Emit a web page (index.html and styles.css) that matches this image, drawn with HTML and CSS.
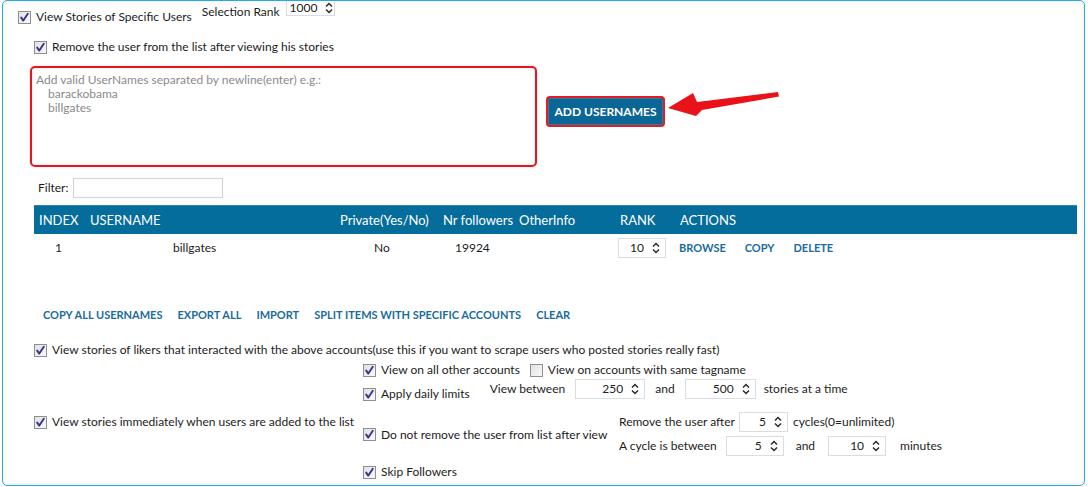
FILE: index.html
```html
<!DOCTYPE html>
<html>
<head>
<meta charset="utf-8">
<link rel="stylesheet" href="styles.css">
</head>
<body>
<div class="panel">
  <div class="row1">
    <label class="cb first"><span class="box"><svg viewBox="0 0 11 11"><path d="M2.2 5.6 L4.3 8.6 L8.8 1.8"/></svg></span>View Stories of Specific Users</label>
    <span class="sel-label">Selection Rank</span>
    <span class="spin sel"><span class="val left">1000</span><svg class="arr" viewBox="0 0 8 12"><path d="M1 4.5 L4 1.5 L7 4.5 M1 7.5 L4 10.5 L7 7.5"/></svg></span>
  </div>
  <div class="row2">
    <label class="cb"><span class="box"><svg viewBox="0 0 11 11"><path d="M2.2 5.6 L4.3 8.6 L8.8 1.8"/></svg></span>Remove the user from the list after viewing his stories</label>
  </div>
  <div class="add">
    <div class="names">
      <div>Add valid UserNames separated by newline(enter) e.g.:</div>
      <div class="ind">barackobama</div>
      <div class="ind">billgates</div>
    </div>
    <div class="btn">ADD USERNAMES</div>
    <svg class="arrow" viewBox="0 0 114 28" width="114" height="28"><polygon points="2,18 27,3 31,12 112,2 113,6.5 36,20 30,26"/></svg>
  </div>
  <div class="filter">
    <span>Filter:</span><span class="input"></span>
  </div>
  <div class="table">
    <div class="thead">
      <span class="c1">INDEX</span>
      <span class="c2">USERNAME</span>
      <span class="c3">Private(Yes/No)</span>
      <span class="c4">Nr followers</span>
      <span class="c5">OtherInfo</span>
      <span class="c6">RANK</span>
      <span class="c7">ACTIONS</span>
    </div>
    <div class="trow">
      <span class="c1 d1">1</span>
      <span class="c2 d2">billgates</span>
      <span class="c3 d3">No</span>
      <span class="c4 d4">19924</span>
      <span class="c5"></span>
      <span class="c6 d6"><span class="spin rank"><span class="val">10</span><svg class="arr" viewBox="0 0 8 12"><path d="M1 4.5 L4 1.5 L7 4.5 M1 7.5 L4 10.5 L7 7.5"/></svg></span></span>
      <span class="c7 d7"><span class="lnk">BROWSE</span><span class="lnk">COPY</span><span class="lnk">DELETE</span></span>
    </div>
  </div>
  <div class="links">
    <span class="lnk">COPY ALL USERNAMES</span>
    <span class="lnk">EXPORT ALL</span>
    <span class="lnk">IMPORT</span>
    <span class="lnk">SPLIT ITEMS WITH SPECIFIC ACCOUNTS</span>
    <span class="lnk">CLEAR</span>
  </div>
  <div class="likers">
    <label class="cb"><span class="box"><svg viewBox="0 0 11 11"><path d="M2.2 5.6 L4.3 8.6 L8.8 1.8"/></svg></span>View stories of likers that interacted with the above accounts(use this if you want to scrape users who posted stories really fast)</label>
  </div>
  <div class="rowb">
    <label class="cb"><span class="box"><svg viewBox="0 0 11 11"><path d="M2.2 5.6 L4.3 8.6 L8.8 1.8"/></svg></span>View on all other accounts</label>
    <label class="cb tag"><span class="box empty"></span>View on accounts with same tagname</label>
  </div>
  <div class="rowc">
    <label class="cb daily"><span class="box"><svg viewBox="0 0 11 11"><path d="M2.2 5.6 L4.3 8.6 L8.8 1.8"/></svg></span>Apply daily limits</label>
    <span class="vb">View between</span>
    <span class="spin w70"><span class="val">250</span><svg class="arr" viewBox="0 0 8 12"><path d="M1 4.5 L4 1.5 L7 4.5 M1 7.5 L4 10.5 L7 7.5"/></svg></span>
    <span class="and">and</span>
    <span class="spin w71"><span class="val">500</span><svg class="arr" viewBox="0 0 8 12"><path d="M1 4.5 L4 1.5 L7 4.5 M1 7.5 L4 10.5 L7 7.5"/></svg></span>
    <span class="sat">stories at a time</span>
  </div>
  <div class="rowd">
    <label class="cb imm"><span class="box"><svg viewBox="0 0 11 11"><path d="M2.2 5.6 L4.3 8.6 L8.8 1.8"/></svg></span>View stories immediately when users are added to the list</label>
    <label class="cb dnr"><span class="box"><svg viewBox="0 0 11 11"><path d="M2.2 5.6 L4.3 8.6 L8.8 1.8"/></svg></span>Do not remove the user from list after view</label>
    <div class="cycles">
      <div class="cl">
        <span>Remove the user after</span>
        <span class="spin w48 g1"><span class="val">5</span><svg class="arr" viewBox="0 0 8 12"><path d="M1 4.5 L4 1.5 L7 4.5 M1 7.5 L4 10.5 L7 7.5"/></svg></span>
        <span class="g2">cycles(0=unlimited)</span>
      </div>
      <div class="cl">
        <span>A cycle is between</span>
        <span class="spin w58 g3"><span class="val">5</span><svg class="arr" viewBox="0 0 8 12"><path d="M1 4.5 L4 1.5 L7 4.5 M1 7.5 L4 10.5 L7 7.5"/></svg></span>
        <span class="g4">and</span>
        <span class="spin w58 g5"><span class="val">10</span><svg class="arr" viewBox="0 0 8 12"><path d="M1 4.5 L4 1.5 L7 4.5 M1 7.5 L4 10.5 L7 7.5"/></svg></span>
        <span class="g6">minutes</span>
      </div>
    </div>
  </div>
  <div class="rowe">
    <label class="cb"><span class="box"><svg viewBox="0 0 11 11"><path d="M2.2 5.6 L4.3 8.6 L8.8 1.8"/></svg></span>Skip Followers</label>
  </div>
</div>
</body>
</html>
```
FILE: styles.css
```css
* { box-sizing: border-box; }
html, body { margin: 0; padding: 0; background: #ffffff; }
body {
  font-family: Lato, "Noto Sans", sans-serif;
  font-size: 12px;
  color: #1c1c1c;
  line-height: 14px;
}
.panel {
  margin-left: 2px;
  width: 1083px;
  height: 486px;
  border: 1px solid #2aa6e2;
  border-radius: 5px;
  box-shadow: inset 0 0 7px rgba(0,0,0,0.07);
  overflow: hidden;
}
.cb { display: flex; align-items: center; white-space: nowrap; }
.box {
  width: 13px; height: 13px; flex: none;
  border: 1px solid #8e8f8f;
  background: linear-gradient(135deg, #e2e2e2, #f8f8f8);
  margin-right: 5px;
  display: flex; align-items: center; justify-content: center;
}
.box svg { width: 11px; height: 11px; }
.box path { fill: none; stroke: #34348a; stroke-width: 1.9; stroke-linecap: round; stroke-linejoin: round; }

.spin {
  display: inline-flex; align-items: center;
  height: 20px; background: #fff;
  border: 1px solid #d8dde4;
  padding-right: 5px;
}
.spin .val { flex: 1; text-align: right; padding-right: 8px; }
.spin .val.left { text-align: left; padding-left: 3px; }
.arr { width: 8px; height: 12px; flex: none; }
.arr path { fill: none; stroke: #2a2a2a; stroke-width: 1.5; }

.row1 { display: flex; align-items: flex-start; height: 30px; }
.row1 .first { margin-left: 15px; margin-top: 9px; }
.sel-label { margin-left: 10px; margin-top: 4px; }
.spin.sel { width: 49px; height: 15px; margin-left: 6px; margin-top: 0; border-top: none; align-items: flex-start; }
.spin.sel .arr { margin-top: 1px; }

.row2 { margin-top: 9px; margin-left: 31px; }

.add { display: flex; align-items: flex-start; margin-top: 12px; margin-left: 27px; }
.names {
  width: 507px; height: 101px;
  border: 2px solid #e4171f;
  border-radius: 5px;
  padding: 5px 0 0 4px;
  color: #8a8a8a;
  box-shadow: inset 0 0 4px rgba(0,0,0,0.08), 0 0 3px rgba(0,0,0,0.15);
}
.names .ind { padding-left: 12px; }
.btn {
  margin-left: 9px; margin-top: 30px;
  width: 119px; height: 31px;
  background: #0a6694;
  border: 2px solid #e01c24;
  border-radius: 4px;
  box-shadow: inset 0 0 0 1px #2d7aa3;
  color: #fff; font-weight: 700; font-size: 12px;
  display: flex; align-items: center; justify-content: center;
}
.arrow { margin-left: 1px; margin-top: 24px; }
.arrow polygon { fill: #ea1219; }

.filter { display: flex; align-items: center; margin-top: 11px; margin-left: 35px; }
.input { width: 150px; height: 20px; margin-left: 5px; border: 1px solid #cfd2d6; background: #fff; }

.table { margin-top: 7px; margin-left: 31px; width: 1043px; }
.thead {
  display: flex; align-items: center; height: 29px;
  background: #046d9c; color: #fff; font-size: 13px;
  border-top: 1px solid #2c87b3;
  padding-bottom: 1px;
}
.trow { display: flex; align-items: center; height: 28px; }
.c1 { width: 51px; padding-left: 5px; }
.c2 { width: 250px; padding-left: 5px; }
.c3 { width: 103px; padding-left: 5px; }
.c4 { width: 76px; padding-left: 5px; }
.c5 { width: 101px; padding-left: 5px; }
.c6 { width: 60px; padding-left: 5px; }
.c7 { flex: 1; padding-left: 5px; }
.d1 { padding-left: 21px; }
.d2 { padding-left: 88px; }
.d3 { padding-left: 39px; }
.d4 { padding-left: 17px; }
.d6 { padding-left: 3px; }
.d7 { padding-left: 4px; display: flex; gap: 19px; }
.spin.rank { width: 48px; }
.lnk { color: #1a6c9c; font-weight: 700; font-size: 11px; }

.links { display: flex; gap: 15px; margin-top: 46px; margin-left: 40px; }

.likers { margin-top: 21px; margin-left: 31px; }
.rowb { display: flex; margin-top: 6px; margin-left: 360px; }
.rowb .tag { margin-left: 10px; }
.rowc { display: flex; align-items: center; margin-top: 2px; margin-left: 360px; height: 20px; }
.rowc .daily { align-self: flex-start; margin-top: 8px; }
.vb { margin-left: 20px; }
.spin.w70 { width: 70px; margin-left: 10px; }
.and { margin-left: 10px; }
.spin.w71 { width: 71px; margin-left: 10px; }
.sat { margin-left: 8px; }

.rowd { display: grid; grid-template-columns: 329px 256px auto; margin-top: 13px; margin-left: 31px; height: 45px; }
.rowd .imm { align-self: start; margin-top: 3px; }
.rowd .dnr { align-self: center; }
.cycles { display: flex; flex-direction: column; gap: 4px; }
.cl { display: flex; align-items: center; height: 20px; }
.spin.w48 { width: 49px; }
.spin.w58 { width: 58px; }
.g1 { margin-left: 4px; }
.g2 { margin-left: 5px; }
.g3 { margin-left: 9px; }
.g4 { margin-left: 12px; }
.g5 { margin-left: 13px; }
.g6 { margin-left: 14px; }

.rowe { margin-top: 8px; margin-left: 360px; }
```
